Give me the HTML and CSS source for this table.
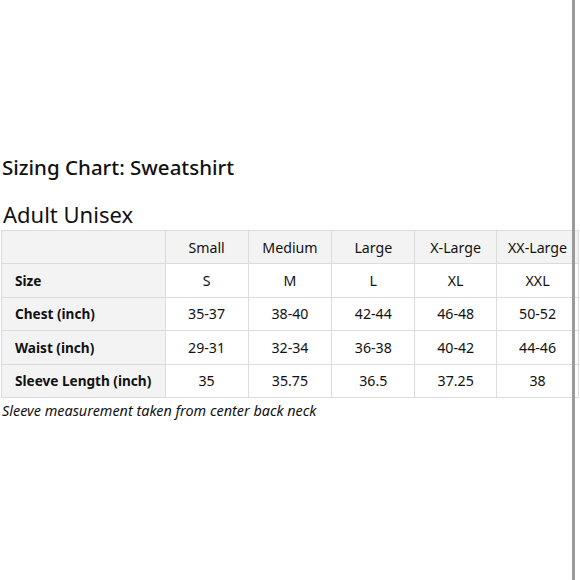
FILE: index.html
```html
<!DOCTYPE html>
<html>
<head>
<meta charset="utf-8">
<link rel="stylesheet" href="styles.css">
</head>
<body>
<div class="page">
  <div class="content">
    <h1 class="title">Sizing Chart: Sweatshirt</h1>
    <h2 class="subtitle">Adult Unisex</h2>
    <table class="chart">
      <colgroup>
        <col class="c-label"><col class="c1"><col class="c2"><col class="c3"><col class="c4"><col class="c5">
      </colgroup>
      <tr class="head">
        <th class="label"></th><th>Small</th><th>Medium</th><th>Large</th><th>X-Large</th><th>XX-Large</th>
      </tr>
      <tr>
        <td class="label">Size</td><td>S</td><td>M</td><td>L</td><td>XL</td><td>XXL</td>
      </tr>
      <tr>
        <td class="label">Chest (inch)</td><td>35-37</td><td>38-40</td><td>42-44</td><td>46-48</td><td>50-52</td>
      </tr>
      <tr>
        <td class="label">Waist (inch)</td><td>29-31</td><td>32-34</td><td>36-38</td><td>40-42</td><td>44-46</td>
      </tr>
      <tr>
        <td class="label">Sleeve Length (inch)</td><td>35</td><td>35.75</td><td>36.5</td><td>37.25</td><td>38</td>
      </tr>
    </table>
    <p class="note">Sleeve measurement taken from center back neck</p>
  </div>
  <div class="scrollbar"></div>
</div>
</body>
</html>
```
FILE: styles.css
```css
html, body {
  margin: 0;
  padding: 0;
  background: #ffffff;
}
body {
  font-family: "Noto Sans", "Open Sans", sans-serif;
  color: #111111;
}
.page {
  width: 580px;
  height: 580px;
  position: relative;
}
.content {
  width: 580px;
  padding-top: 152px;
}
.scrollbar {
  position: absolute;
  top: 0;
  left: 572px;
  width: 3px;
  height: 580px;
  background: #9a9a9a;
}
.title {
  margin: 0 0 0 2px;
  font-size: 20.5px;
  font-weight: 500;
  line-height: 30px;
}
.subtitle {
  margin: 17px 0 0 3px;
  font-size: 22px;
  font-weight: 400;
  line-height: 30px;
}
.chart {
  margin: 1px 0 0 1px;
  border-collapse: collapse;
  width: 578px;
  font-size: 14.2px;
}
.chart th, .chart td {
  border: 1.5px solid #dcdcdc;
  height: 32.4px;
  padding: 0;
  text-align: center;
  font-weight: 400;
}
.chart .label {
  text-align: left;
  padding-left: 13px;
  background: #f3f3f3;
  font-weight: 700;
  font-size: 13.6px;
}
.head th {
  background: #f3f3f3;
}
.c-label { width: 164px; }
.c1 { width: 83px; }
.c2 { width: 84px; }
.c3 { width: 83px; }
.c4 { width: 82px; }
.c5 { width: 82px; }
.note {
  margin: 3px 0 0 2px;
  font-size: 14.4px;
  font-style: italic;
}
```
